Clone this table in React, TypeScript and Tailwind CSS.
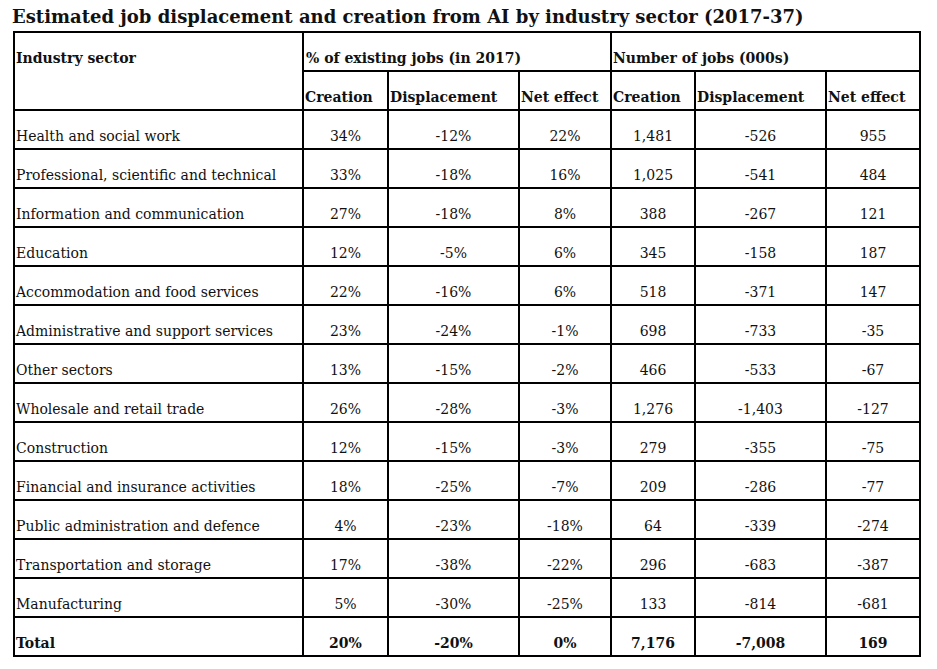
import React from "react";

const rows: string[][] = [
  ["Health and social work", "34%", "-12%", "22%", "1,481", "-526", "955"],
  ["Professional, scientific and technical", "33%", "-18%", "16%", "1,025", "-541", "484"],
  ["Information and communication", "27%", "-18%", "8%", "388", "-267", "121"],
  ["Education", "12%", "-5%", "6%", "345", "-158", "187"],
  ["Accommodation and food services", "22%", "-16%", "6%", "518", "-371", "147"],
  ["Administrative and support services", "23%", "-24%", "-1%", "698", "-733", "-35"],
  ["Other sectors", "13%", "-15%", "-2%", "466", "-533", "-67"],
  ["Wholesale and retail trade", "26%", "-28%", "-3%", "1,276", "-1,403", "-127"],
  ["Construction", "12%", "-15%", "-3%", "279", "-355", "-75"],
  ["Financial and insurance activities", "18%", "-25%", "-7%", "209", "-286", "-77"],
  ["Public administration and defence", "4%", "-23%", "-18%", "64", "-339", "-274"],
  ["Transportation and storage", "17%", "-38%", "-22%", "296", "-683", "-387"],
  ["Manufacturing", "5%", "-30%", "-25%", "133", "-814", "-681"],
];

const total = ["Total", "20%", "-20%", "0%", "7,176", "-7,008", "169"];

function Cell({
  children,
  center,
  bold,
  className = "",
}: {
  children: React.ReactNode;
  center?: boolean;
  bold?: boolean;
  className?: string;
}) {
  return (
    <div
      className={`bg-white h-[37px] flex items-end pb-[3px] leading-[18px] whitespace-nowrap ${
        center ? "justify-center" : "justify-start pl-[1px]"
      } ${bold ? "font-bold" : ""} ${className}`}
    >
      {children}
    </div>
  );
}

export default function App() {
  return (
    <div
      className="bg-white w-[937px] h-[669px] text-[#111] overflow-hidden"
      style={{ fontFamily: '"DejaVu Serif", "Liberation Serif", serif' }}
    >
      <div className="pl-[12px] pt-[6px] h-[31px] text-[18px] leading-[22px] font-bold whitespace-nowrap">
        Estimated job displacement and creation from AI by industry sector (2017-37)
      </div>
      <div className="ml-[13px] w-[908px] bg-black p-[2px] grid grid-cols-[287px_83px_129px_90px_82px_129px_92px] gap-[2px] text-[14px]">
        <div className="bg-white row-span-2 font-bold pl-[1px] pt-[16px] leading-[18px]">Industry sector</div>
        <Cell bold className="col-span-3 pl-[2px]">% of existing jobs (in 2017)</Cell>
        <Cell bold className="col-span-3">Number of jobs (000s)</Cell>
        <Cell bold>Creation</Cell>
        <Cell bold>Displacement</Cell>
        <Cell bold>Net effect</Cell>
        <Cell bold>Creation</Cell>
        <Cell bold>Displacement</Cell>
        <Cell bold>Net effect</Cell>
        {rows.map((r) => (
          <React.Fragment key={r[0]}>
            {r.map((v, i) => (
              <Cell key={i} center={i > 0}>
                {v}
              </Cell>
            ))}
          </React.Fragment>
        ))}
        {total.map((v, i) => (
          <Cell key={"t" + i} center={i > 0} bold>
            {v}
          </Cell>
        ))}
      </div>
    </div>
  );
}
